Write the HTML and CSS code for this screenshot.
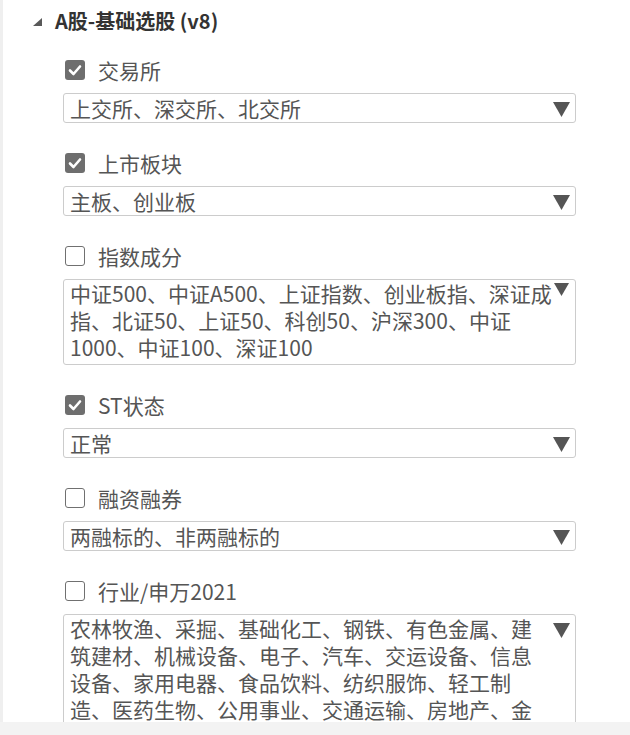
FILE: index.html
```html
<!DOCTYPE html>
<html lang="zh-CN">
<head>
<meta charset="utf-8">
<title>A股-基础选股</title>
<link rel="stylesheet" href="styles.css">
</head>
<body>
<div class="panel">
  <div class="title-row">
    <svg class="tree-caret" width="9" height="8" viewBox="0 0 9 8"><polygon points="9,0 9,8 0,8" fill="#595959"/></svg>
    <span class="title">A股-基础选股 (v8)</span>
  </div>
  <div class="groups">
    <div class="group">
      <label class="check-row">
        <span class="box checked"><svg width="20" height="20" viewBox="0 0 20 20"><polyline points="5,10.5 8.5,14 15,6.5" fill="none" stroke="#fff" stroke-width="2.6" stroke-linecap="round" stroke-linejoin="round"/></svg></span>
        <span class="label">交易所</span>
      </label>
      <div class="select"><span class="value">上交所、深交所、北交所</span><span class="arrow"></span></div>
    </div>
    <div class="group">
      <label class="check-row">
        <span class="box checked"><svg width="20" height="20" viewBox="0 0 20 20"><polyline points="5,10.5 8.5,14 15,6.5" fill="none" stroke="#fff" stroke-width="2.6" stroke-linecap="round" stroke-linejoin="round"/></svg></span>
        <span class="label">上市板块</span>
      </label>
      <div class="select"><span class="value">主板、创业板</span><span class="arrow"></span></div>
    </div>
    <div class="group">
      <label class="check-row">
        <span class="box"></span>
        <span class="label">指数成分</span>
      </label>
      <div class="select multi index"><span class="value">中证500、中证A500、上证指数、创业板指、深证成指、北证50、上证50、科创50、沪深300、中证1000、中证100、深证100</span><span class="arrow small"></span></div>
    </div>
    <div class="group">
      <label class="check-row">
        <span class="box checked"><svg width="20" height="20" viewBox="0 0 20 20"><polyline points="5,10.5 8.5,14 15,6.5" fill="none" stroke="#fff" stroke-width="2.6" stroke-linecap="round" stroke-linejoin="round"/></svg></span>
        <span class="label">ST状态</span>
      </label>
      <div class="select"><span class="value">正常</span><span class="arrow"></span></div>
    </div>
    <div class="group">
      <label class="check-row">
        <span class="box"></span>
        <span class="label">融资融券</span>
      </label>
      <div class="select"><span class="value">两融标的、非两融标的</span><span class="arrow"></span></div>
    </div>
    <div class="group">
      <label class="check-row">
        <span class="box"></span>
        <span class="label">行业/申万2021</span>
      </label>
      <div class="select multi tall"><span class="value">农林牧渔、采掘、基础化工、钢铁、有色金属、建筑建材、机械设备、电子、汽车、交运设备、信息设备、家用电器、食品饮料、纺织服饰、轻工制造、医药生物、公用事业、交通运输、房地产、金融服务、商业贸易、休闲服务、信息服务、综合</span><span class="arrow"></span></div>
    </div>
  </div>
</div>
<div class="hbar"></div>
</body>
</html>
```

FILE: styles.css
```css
html, body {
  margin: 0;
  padding: 0;
  background: #ffffff;
}

body {
  font-family: "Noto Sans CJK SC", "Noto Sans", sans-serif;
  color: #555555;
}

.panel {
  height: 722px;
  overflow: hidden;
  border-left: 3px solid #efefef;
  box-sizing: border-box;
}

.title-row {
  display: flex;
  align-items: center;
  height: 26px;
  margin-top: 8px;
  padding-left: 30px;
}

.tree-caret {
  flex: none;
  margin-right: 13px;
  margin-top: 1px;
}

.title {
  font-size: 20px;
  font-weight: 700;
  color: #333333;
  line-height: 26px;
  white-space: nowrap;
}

.groups {
  display: flex;
  flex-direction: column;
  gap: 27px;
  padding: 23px 54px 0 60px;
}

.group {
  display: flex;
  flex-direction: column;
  gap: 10px;
}

.check-row {
  display: flex;
  align-items: center;
  height: 26px;
}

.box {
  flex: none;
  width: 20px;
  height: 20px;
  box-sizing: border-box;
  margin-left: 2px;
  margin-right: 13px;
  border: 1.5px solid #707070;
  border-radius: 3px;
  background: #ffffff;
}

.box.checked {
  border: none;
  background: #6e6e6e;
}

.box svg {
  display: block;
}

.label {
  font-size: 21px;
  line-height: 24px;
  color: #555555;
  white-space: nowrap;
}

.select {
  position: relative;
  height: 30px;
  box-sizing: border-box;
  border: 1px solid #cccccc;
  border-radius: 3px;
  padding: 0 24px 0 6px;
  font-size: 21px;
  line-height: 28px;
  color: #555555;
  background: #ffffff;
}

.select .value {
  display: block;
  white-space: nowrap;
  overflow: hidden;
}

.select.multi {
  height: auto;
  padding: 0 23px 3px 6px;
  line-height: 27px;
}

.select.multi .value {
  white-space: normal;
  overflow: visible;
}

.select.tall {
  height: 220px;
}

.arrow {
  position: absolute;
  right: 5px;
  top: 8px;
  width: 17px;
  height: 15px;
  background: #555555;
  clip-path: polygon(0 0, 100% 0, 50% 100%);
}

.arrow.small {
  top: 3px;
  right: 6px;
  width: 15px;
  height: 13px;
}

.hbar {
  height: 13px;
  background: #f3f3f3;
}
```
